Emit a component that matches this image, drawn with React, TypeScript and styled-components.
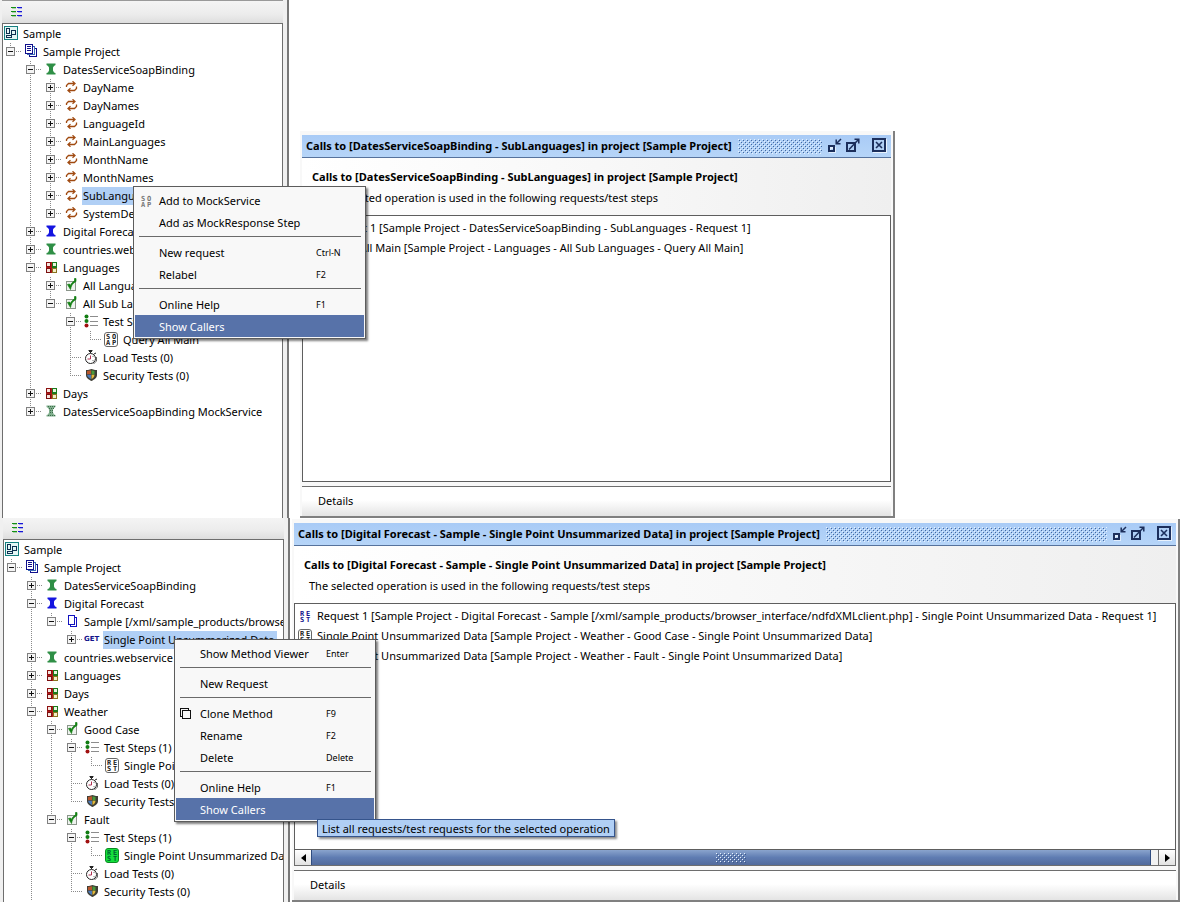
import React from 'react';
import styled, { createGlobalStyle, css } from 'styled-components';

const GlobalStyle = createGlobalStyle`
  *, *::before, *::after { box-sizing: border-box; }
  body {
    margin: 0;
    background: #fff;
    color: #000;
    font-family: 'Noto Sans', 'Open Sans', sans-serif;
    font-size: 11px;
    line-height: 18px;
  }
  button { font: inherit; color: inherit; margin: 0; padding: 0; border: 0; background: none; }
  h2, h3, p, ul { margin: 0; padding: 0; font-size: inherit; list-style: none; }
`;

/* ---------- page ---------- */

const Page = styled.main`
  display: grid;
  grid-template-rows: 1fr auto;
  min-height: 100vh;
`;

const Workspace = styled.section`
  position: relative;
  display: flex;
  min-width: 0;
`;

/* ---------- navigator ---------- */

const Navigator = styled.aside<{ $inset: number }>`
  flex: none;
  display: flex;
  flex-direction: column;
  width: ${p => 287 + p.$inset}px;
  padding: 0 4px 0 ${p => p.$inset}px;
  background: #f0f0f0;
  border-right: 2px solid #787878;
`;

const NavToolbar = styled.div<{ $lined?: boolean }>`
  display: flex;
  align-items: center;
  height: ${p => (p.$lined ? 23 : 21)}px;
  padding: 0 0 1px 9px;
  background: linear-gradient(#f4f4f4, #ececec 60%, #dedede);
  ${p => p.$lined && css`border-top: 1px solid #999;`}
`;

const TreeFrame = styled.div`
  flex: 1;
  padding: 1px 0;
  overflow: hidden;
  background: #fff;
  border: 1px solid #6e6e6e;
  border-bottom: 0;
`;

const TreeRow = styled.div`
  display: flex;
  height: 18px;
  white-space: nowrap;
`;

type GuideKind = 'blank' | 'line' | 'tee' | 'end';
const dotsDown = 'repeating-linear-gradient(180deg, #8a8a8a 0 1px, transparent 1px 2px)';
const dotsAcross = 'repeating-linear-gradient(90deg, #8a8a8a 0 1px, transparent 1px 2px)';

const Guide = styled.span<{ $kind: GuideKind }>`
  flex: none;
  width: 20px;
  height: 18px;
  padding: 4px 0 0 3px;
  background-repeat: no-repeat;
  ${p => p.$kind === 'line' && css`
    background-image: ${dotsDown};
    background-size: 1px 18px;
    background-position: 7px 0;
  `}
  ${p => (p.$kind === 'tee' || p.$kind === 'end') && css`
    background-image: ${dotsDown}, ${dotsAcross};
    background-size: 1px ${p.$kind === 'tee' ? 18 : 8}px, 12px 1px;
    background-position: 7px 0, 7px 8px;
  `}
`;

const Expander = styled.button`
  display: block;
  width: 9px;
  height: 9px;
`;

const IconCell = styled.span`
  flex: none;
  display: flex;
  align-items: center;
  justify-content: center;
  width: 16px;
  height: 16px;
`;

const TreeLabel = styled.span<{ $selected?: boolean }>`
  margin-left: 3px;
  padding: 0 2px 0 1px;
  background: ${p => (p.$selected ? '#b0cff5' : 'transparent')};
`;

/* ---------- result windows ---------- */

const Desk = styled.div<{ $roomy?: boolean }>`
  flex: 1;
  display: flex;
  min-width: 0;
  padding: ${p => (p.$roomy ? '131px 0 0 11px' : '1px 0 0 2px')};
`;

const Window = styled.article<{ $basis: string }>`
  flex: 0 1 ${p => p.$basis};
  display: flex;
  flex-direction: column;
  min-width: 0;
  padding: 4px 2px 0;
  background: #f8f8f8;
  border-right: 2px solid #808080;
  border-bottom: 2px solid #808080;
`;

const TitleBar = styled.header`
  display: flex;
  align-items: center;
  height: 23px;
  padding: 0 4px;
  background: linear-gradient(#a9cbf6, #b6d5f8);
  border-bottom: 1px solid #56729c;
`;

const TitleText = styled.h2`
  font-weight: 700;
  white-space: nowrap;
`;

const Bumps = styled.svg`
  flex: 1;
  min-width: 0;
  height: 15px;
  margin: 0 2px 0 6px;
`;

const WindowButton = styled.button<{ $apart?: boolean }>`
  display: flex;
  width: 15px;
  height: 15px;
  margin-bottom: 2px;
  margin-left: ${p => (p.$apart ? 12 : 3)}px;
`;

const Summary = styled.div`
  height: 57px;
  padding: 10px 10px 0;
  background: linear-gradient(90deg, #fff, #f8f8f8 50%, #efefef);
  white-space: nowrap;
`;

const SummaryTitle = styled.h3`
  font-weight: 700;
`;

const SummaryNote = styled.p`
  padding: 3px 0 0 5px;
`;

const ResultList = styled.ul`
  flex: 1;
  min-height: 0;
  padding: 2px 0;
  overflow: hidden;
  background: #fff;
  border: 1px solid #5e5e5e;
`;

const ResultRow = styled.li`
  display: flex;
  align-items: center;
  height: 20px;
  padding-left: 2px;
  white-space: nowrap;
`;

const ResultText = styled.span`
  margin-left: 4px;
`;

const ScrollBar = styled.div`
  display: flex;
  height: 16px;
  background: #eee;
  border: 1px solid #6e6e6e;
  border-top: 0;
`;

const ScrollButton = styled.button`
  display: flex;
  align-items: center;
  justify-content: center;
  width: 16px;
  background: linear-gradient(#fff, #e2e2e2);
`;

const Thumb = styled.div`
  flex: 1;
  display: flex;
  align-items: center;
  justify-content: center;
  background: linear-gradient(#8aa4cd, #5f7cb2 50%, #526b9c);
  border: 1px solid #2f4c80;
  border-width: 0 1px;
`;

const Track = styled.div`
  flex: 1;
  display: flex;
  padding-right: 7px;
  background: #f2f2f2;
  border-right: 1px solid #6e6e6e;
`;

const Details = styled.footer`
  height: 30px;
  margin-top: 4px;
  padding: 5px 16px;
  background: linear-gradient(#fff 45%, #e4e4e4);
  border-top: 1px solid #6e6e6e;
`;

/* ---------- menus ---------- */

const Menu = styled.div<{ $x: number; $y: number; $width: number }>`
  position: absolute;
  z-index: 2;
  left: ${p => p.$x}px;
  top: ${p => p.$y}px;
  width: ${p => p.$width}px;
  padding: 2px 1px 1px;
  background: #f8f8f8;
  border: 1px solid #5c5c5c;
  box-shadow: 2px 2px 2px rgba(0, 0, 0, 0.5);
`;

const MenuItem = styled.button<{ $active?: boolean }>`
  display: grid;
  grid-template-columns: 24px 1fr 48px;
  align-items: center;
  width: 100%;
  height: 22px;
  padding-top: 2px;
  text-align: left;
  white-space: nowrap;
  background: ${p => (p.$active ? '#5772a9' : 'transparent')};
  color: ${p => (p.$active ? '#fff' : 'inherit')};
`;

const MenuIcon = styled.span`
  display: flex;
  padding-left: 4px;
`;

const Shortcut = styled.span`
  font-size: 9px;
`;

const Separator = styled.hr`
  height: 1px;
  margin: 3px 3px 4px 4px;
  border: 0;
  background: #6a6a6a;
`;

const Tooltip = styled.div`
  position: absolute;
  z-index: 3;
  left: 317px;
  top: 301px;
  height: 18px;
  padding: 0 4px;
  line-height: 17px;
  white-space: nowrap;
  background: #b0cff5;
  border: 1px solid #35548c;
  box-shadow: 2px 2px 2px rgba(0, 0, 0, 0.45);
`;

/* ---------- icons ---------- */

const GridIcon = () => (
  <svg width="12" height="10" shapeRendering="crispEdges">
    {[0, 4, 8].map(y => (
      <g key={y}>
        <rect x="0" y={y} width="5" height="1" fill="#149014" />
        <rect x="1" y={y + 1} width="4" height="1" fill="#149014" opacity="0.300" />
        <rect x="6" y={y} width="5" height="1" fill="#1616d8" />
        <rect x="7" y={y + 1} width="4" height="1" fill="#1616d8" opacity="0.300" />
      </g>
    ))}
  </svg>
);

const RootIcon = () => (
  <svg width="14" height="14" shapeRendering="crispEdges" fill="none">
    <rect x="0.5" y="0.5" width="13" height="13" fill="#e4f6f4" stroke="#158080" />
    <rect x="2.5" y="2.5" width="3" height="5" stroke="#0d2f4f" />
    <rect x="7.5" y="4.5" width="4" height="4" stroke="#0d2f4f" />
    <rect x="2.5" y="9.5" width="5" height="2" stroke="#0d2f4f" />
  </svg>
);

const ProjectIcon = () => (
  <svg width="13" height="14" shapeRendering="crispEdges" fill="#fff" stroke="#10108c">
    <path d="M4.500 4.500h7v8h-7z" />
    <path d="M2.500 2.500h7v8h-7z" stroke="#3a6ab8" />
    <path d="M0.500 0.500h7v9h-7z" />
    <path d="M2 2.500h4M2 4.500h4M2 6.500h4" />
  </svg>
);

const DocIcon = () => (
  <svg width="11" height="13" shapeRendering="crispEdges" fill="#fff" stroke="#1212c0">
    <path d="M3.500 2.500h6v9h-6z" />
    <path d="M1.500 0.500h6v9h-6z" />
  </svg>
);

const BeamIcon = ({ color, faded }: { color: string; faded?: boolean }) => (
  <svg width="11" height="12">
    <path
      d="M0.500 0.500h9v1.500L8 3L7 4.500v3L8 9.500l1.500 0.500v1.500h-9v-1.500L2 9.500L3 7.500v-3L2 3L0.500 2z"
      fill={faded ? '#7fae8c' : color}
    />
    {faded && (
      <path d="M2 1.500h8M3 3.500h6M4 5.500h4M4 7.500h4M2 10.500h8" stroke="#3c6b4a" strokeDasharray="1 1" />
    )}
  </svg>
);

const CycleIcon = () => (
  <svg width="13" height="12" fill="none" stroke="#a04a10" strokeWidth="1.300">
    <path d="M1.500 6V4.500L3.500 2.500H9" />
    <path d="M7.500 0.300L10 2.500 7.500 4.700" />
    <path d="M11.500 5.500V7.500L9.500 9.500H4" />
    <path d="M5.500 7.300L3 9.500 5.500 11.700" />
  </svg>
);

const SuiteIcon = () => (
  <svg width="11" height="11" shapeRendering="crispEdges">
    <rect x="0.500" y="0.500" width="4" height="4" stroke="#8c1010" fill="#f6e4de" />
    <rect x="6.500" y="0.500" width="4" height="4" stroke="#1c7a1c" fill="#e8f6e0" />
    <rect x="0.500" y="6.500" width="4" height="4" stroke="#7a1010" fill="#f6e4de" />
    <rect x="6.500" y="6.500" width="4" height="4" stroke="#8a7420" fill="#f4eec8" />
    <path d="M0 5.500h5M5.500 0v11" stroke="#b01818" />
    <path d="M6 5.500h5" stroke="#1c7a1c" />
  </svg>
);

const CaseIcon = () => (
  <svg width="13" height="14">
    <rect x="1.500" y="3.500" width="9" height="9" fill="#eef2ee" stroke="#8a958a" />
    <path d="M2.500 6.500L5.500 11.500C6 8 7.500 5 11 3.500V0.500H9.500V3C7.500 4 6.300 5.500 5.500 7.500L4.500 6z" fill="#128012" stroke="#128012" strokeWidth="0.700" />
  </svg>
);

const StepsIcon = () => (
  <svg width="14" height="14">
    <circle cx="2.500" cy="2.500" r="2" fill="#127c12" />
    <circle cx="2.500" cy="7" r="2" fill="#127c12" />
    <circle cx="2.500" cy="11.500" r="2" fill="#a01010" />
    <path d="M6 2.500h8M6 7.500h8M6 11.500h8" stroke="#8c8c8c" shapeRendering="crispEdges" />
  </svg>
);

type BadgeProps = { top: string; bottom: string; ink?: string; fill?: string; frame?: string };
const BadgeIcon = ({ top, bottom, ink = '#222', fill = 'none', frame = 'none' }: BadgeProps) => (
  <svg width="15" height="15" fontFamily="'DejaVu Sans Mono', monospace" fontSize="7" fontWeight="700">
    <rect x="0.500" y="0.500" width="13" height="14" rx="2.500" fill={fill} stroke={frame} />
    <text x="2" y="7" fill={ink}>{top[0]}</text>
    <text x="8" y="7" fill={ink}>{top[1]}</text>
    <text x="2" y="13" fill={ink}>{bottom[0]}</text>
    <text x="8" y="13" fill={ink}>{bottom[1]}</text>
  </svg>
);

const GetIcon = () => (
  <svg width="16" height="8" overflow="visible" fontFamily="'DejaVu Sans', sans-serif" fontSize="7" fontWeight="700">
    <text x="0" y="6" fill="#12128c">GET</text>
  </svg>
);

const WatchIcon = () => (
  <svg width="14" height="15" fill="none" stroke="#222">
    <circle cx="6.500" cy="8.500" r="5" fill="#fff" />
    <path d="M4.500 0.500h4M5 1.500h3M6.500 1v2M10 4l2-1" />
    <path d="M12.500 7v4L9.500 14" stroke="#666" />
    <path d="M6.500 5.500v3.500h-3" stroke="#b03050" />
    <path d="M9.500 6l-1 1M9.500 11l-1-1" stroke="#777" />
  </svg>
);

const ShieldIcon = () => (
  <svg width="13" height="12">
    <path d="M1 1h2l3.500-1L10 1h2v5c0 3-2.500 4.500-5.500 6C3.500 10.500 1 9 1 6z" fill="#3e3e36" />
    <path d="M2 2L6 1.200v4H2z" fill="#b8562c" />
    <path d="M6.500 1.200L9.500 2v3.500H6.500z" fill="#4a9a3a" />
    <path d="M2 5.800H6V10C4 9 2.400 8 2 5.800z" fill="#4a78b8" />
    <path d="M6.500 5.800h3C9.400 8 8.500 9 6.500 10z" fill="#e2b83a" />
  </svg>
);

const CloneIcon = () => (
  <svg width="12" height="12" shapeRendering="crispEdges" fill="#f8f8f8" stroke="#111">
    <path d="M0.500 0.500h8v8h-8z" />
    <path d="M2.500 2.500h8v8h-8z" />
  </svg>
);

const IconifyIcon = () => (
  <svg width="15" height="15" fill="none">
    <path d="M2 9h5v5H2z" stroke="#fff" strokeWidth="2" transform="translate(1 1)" opacity="0.600" />
    <path d="M2 8h5v5H2z" stroke="#1c2f5c" strokeWidth="2" shapeRendering="crispEdges" />
    <path d="M9.200 1.500v4.300H13.500M9.500 5.500L14 1" stroke="#1c2f5c" strokeWidth="1.500" />
  </svg>
);

const MaximizeIcon = () => (
  <svg width="15" height="15" fill="none">
    <path d="M2 5h8v8H2z" stroke="#1c2f5c" strokeWidth="2" shapeRendering="crispEdges" />
    <path d="M4 11.500L13 2M9.500 1.200h4.300V5.500" stroke="#1c2f5c" strokeWidth="1.500" />
  </svg>
);

const CloseIcon = () => (
  <svg width="15" height="15" fill="none">
    <path d="M2 2h12v12H2z" stroke="#fff" opacity="0.700" strokeWidth="2" />
    <path d="M1 1h12v12H1z" stroke="#1c2f5c" strokeWidth="2" fill="#b0cff5" shapeRendering="crispEdges" />
    <path d="M4 4l6 6M10 4l-6 6" stroke="#1c2f5c" strokeWidth="1.600" />
  </svg>
);

const BumpPattern = ({ id, dark }: { id: string; dark: string }) => (
  <>
    <defs>
      <pattern id={id} width="4" height="4" patternUnits="userSpaceOnUse">
        <rect x="0" y="0" width="1" height="1" fill="#e6f1fd" />
        <rect x="2" y="2" width="1" height="1" fill="#e6f1fd" />
        <rect x="1" y="1" width="1" height="1" fill={dark} />
        <rect x="3" y="3" width="1" height="1" fill={dark} />
      </pattern>
    </defs>
    <rect width="100%" height="100%" fill={`url(#${id})`} shapeRendering="crispEdges" />
  </>
);

const icons = {
  root: <RootIcon />,
  project: <ProjectIcon />,
  soapInterface: <BeamIcon color="#2f8f46" />,
  restInterface: <BeamIcon color="#1414e0" />,
  mock: <BeamIcon color="#2f8f46" faded />,
  operation: <CycleIcon />,
  suite: <SuiteIcon />,
  testCase: <CaseIcon />,
  steps: <StepsIcon />,
  soap: <BadgeIcon top="SO" bottom="AP" fill="#fff" frame="#666" />,
  rest: <BadgeIcon top="RE" bottom="ST" fill="#fff" frame="#666" />,
  restPassed: <BadgeIcon top="RE" bottom="ST" fill="#14e03c" frame="#0b8a22" ink="#063" />,
  restPlain: <BadgeIcon top="RE" bottom="ST" ink="#12128c" />,
  soapMuted: <BadgeIcon top="SO" bottom="AP" ink="#777" />,
  resource: <DocIcon />,
  get: <GetIcon />,
  watch: <WatchIcon />,
  shield: <ShieldIcon />,
  clone: <CloneIcon />,
};
type IconName = keyof typeof icons;

/* ---------- tree ---------- */

type Node = {
  label: string;
  icon: IconName;
  open?: boolean;
  closed?: boolean;
  selected?: boolean;
  followed?: boolean;
  children?: Node[];
};

const operation = (label: string, selected = false): Node => ({
  label, icon: 'operation', closed: true, selected,
});

const loadAndSecurity: Node[] = [
  { label: 'Load Tests (0)', icon: 'watch' },
  { label: 'Security Tests (0)', icon: 'shield' },
];

const soapTree: Node = {
  label: 'Sample', icon: 'root',
  children: [{
    label: 'Sample Project', icon: 'project', open: true,
    children: [
      {
        label: 'DatesServiceSoapBinding', icon: 'soapInterface', open: true,
        children: [
          operation('DayName'), operation('DayNames'), operation('LanguageId'),
          operation('MainLanguages'), operation('MonthName'), operation('MonthNames'),
          operation('SubLanguages', true), operation('SystemDetails'),
        ],
      },
      { label: 'Digital Forecast', icon: 'restInterface', closed: true },
      { label: 'countries.webservice', icon: 'soapInterface', closed: true },
      {
        label: 'Languages', icon: 'suite', open: true,
        children: [
          { label: 'All Languages', icon: 'testCase', closed: true },
          {
            label: 'All Sub Languages', icon: 'testCase', open: true,
            children: [
              {
                label: 'Test Steps (1)', icon: 'steps', open: true,
                children: [{ label: 'Query All Main', icon: 'soap' }],
              },
              ...loadAndSecurity,
            ],
          },
        ],
      },
      { label: 'Days', icon: 'suite', closed: true },
      { label: 'DatesServiceSoapBinding MockService', icon: 'mock', closed: true },
    ],
  }],
};

const weatherCase = (label: string, icon: IconName): Node => ({
  label, icon: 'testCase', open: true,
  children: [
    {
      label: 'Test Steps (1)', icon: 'steps', open: true,
      children: [{ label: 'Single Point Unsummarized Data', icon }],
    },
    ...loadAndSecurity,
  ],
});

const restTree: Node = {
  label: 'Sample', icon: 'root',
  children: [{
    label: 'Sample Project', icon: 'project', open: true,
    children: [
      { label: 'DatesServiceSoapBinding', icon: 'soapInterface', closed: true },
      {
        label: 'Digital Forecast', icon: 'restInterface', open: true,
        children: [{
          label: 'Sample [/xml/sample_products/browser_interface]', icon: 'resource', open: true,
          children: [{
            label: 'Single Point Unsummarized Data', icon: 'get', closed: true, selected: true,
          }],
        }],
      },
      { label: 'countries.webservice', icon: 'soapInterface', closed: true },
      { label: 'Languages', icon: 'suite', closed: true },
      { label: 'Days', icon: 'suite', closed: true },
      {
        label: 'Weather', icon: 'suite', open: true, followed: true,
        children: [weatherCase('Good Case', 'rest'), weatherCase('Fault', 'restPassed')],
      },
    ],
  }],
};

type BranchProps = { node: Node; trail?: GuideKind[]; branch?: GuideKind };

function Branch({ node, trail = [], branch }: BranchProps) {
  const inner: GuideKind[] = branch ? [...trail, branch === 'tee' ? 'line' : 'blank'] : trail;
  return (
    <li>
      <TreeRow>
        {trail.map((kind, i) => <Guide key={i} $kind={kind} />)}
        {branch && (
          <Guide $kind={branch}>
            {(node.open || node.closed) && (
              <Expander aria-label={`${node.open ? 'Collapse' : 'Expand'} ${node.label}`}>
                <svg width="9" height="9" shapeRendering="crispEdges" display="block">
                  <rect x="0.500" y="0.500" width="8" height="8" fill="#f4f4f4" stroke="#808080" />
                  <path d={node.open ? 'M2 4.500h5' : 'M2 4.500h5M4.500 2v5'} stroke="#111" />
                </svg>
              </Expander>
            )}
          </Guide>
        )}
        <IconCell>{icons[node.icon]}</IconCell>
        <TreeLabel $selected={node.selected}>{node.label}</TreeLabel>
      </TreeRow>
      {node.children && (
        <ul>
          {node.children.map((child, i) => (
            <Branch
              key={i}
              node={child}
              trail={inner}
              branch={i < node.children!.length - 1 || child.followed ? 'tee' : 'end'}
            />
          ))}
        </ul>
      )}
    </li>
  );
}

function ProjectNavigator({ tree, inset, lined }: { tree: Node; inset: number; lined?: boolean }) {
  return (
    <Navigator $inset={inset}>
      <NavToolbar $lined={lined}><GridIcon /></NavToolbar>
      <TreeFrame><ul><Branch node={tree} /></ul></TreeFrame>
    </Navigator>
  );
}

/* ---------- window ---------- */

type CallsProps = {
  id: string;
  title: string;
  basis: string;
  rows: { icon: IconName; text: string }[];
  scroll?: boolean;
};

function CallsWindow({ id, title, basis, rows, scroll }: CallsProps) {
  return (
    <Window $basis={basis}>
      <TitleBar>
        <TitleText>{title}</TitleText>
        <Bumps><BumpPattern id={`${id}-title`} dark="#44689e" /></Bumps>
        <WindowButton aria-label="Minimize"><IconifyIcon /></WindowButton>
        <WindowButton aria-label="Maximize"><MaximizeIcon /></WindowButton>
        <WindowButton aria-label="Close" $apart><CloseIcon /></WindowButton>
      </TitleBar>
      <Summary>
        <SummaryTitle>{title}</SummaryTitle>
        <SummaryNote>The selected operation is used in the following requests/test steps</SummaryNote>
      </Summary>
      <ResultList>
        {rows.map(row => (
          <ResultRow key={row.text}>
            <IconCell>{icons[row.icon]}</IconCell>
            <ResultText>{row.text}</ResultText>
          </ResultRow>
        ))}
      </ResultList>
      {scroll && (
        <ScrollBar>
          <ScrollButton aria-label="Scroll left">
            <svg width="5" height="8"><path d="M5 0v8L0 4z" /></svg>
          </ScrollButton>
          <Track>
            <Thumb>
              <svg width="30" height="10"><BumpPattern id={`${id}-thumb`} dark="#3f5a8c" /></svg>
            </Thumb>
          </Track>
          <ScrollButton aria-label="Scroll right">
            <svg width="5" height="8"><path d="M0 0v8l5-4z" /></svg>
          </ScrollButton>
        </ScrollBar>
      )}
      <Details>Details</Details>
    </Window>
  );
}

/* ---------- menu ---------- */

type Entry = { label: string; keys?: string; icon?: IconName; active?: boolean } | 'rule';

const soapMenu: Entry[] = [
  { label: 'Add to MockService', icon: 'soapMuted' },
  { label: 'Add as MockResponse Step' },
  'rule',
  { label: 'New request', keys: 'Ctrl-N' },
  { label: 'Relabel', keys: 'F2' },
  'rule',
  { label: 'Online Help', keys: 'F1' },
  { label: 'Show Callers', active: true },
];

const restMenu: Entry[] = [
  { label: 'Show Method Viewer', keys: 'Enter' },
  'rule',
  { label: 'New Request' },
  'rule',
  { label: 'Clone Method', keys: 'F9', icon: 'clone' },
  { label: 'Rename', keys: 'F2' },
  { label: 'Delete', keys: 'Delete' },
  'rule',
  { label: 'Online Help', keys: 'F1' },
  { label: 'Show Callers', active: true },
];

function ContextMenu({ entries, x, y, width }: { entries: Entry[]; x: number; y: number; width: number }) {
  return (
    <Menu role="menu" $x={x} $y={y} $width={width}>
      {entries.map((entry, i) =>
        entry === 'rule' ? (
          <Separator key={i} />
        ) : (
          <MenuItem key={i} role="menuitem" $active={entry.active}>
            <MenuIcon>{entry.icon && icons[entry.icon]}</MenuIcon>
            <span>{entry.label}</span>
            <Shortcut>{entry.keys}</Shortcut>
          </MenuItem>
        ),
      )}
    </Menu>
  );
}

export default function App() {
  return (
    <>
      <GlobalStyle />
      <Page>
        <Workspace>
          <ProjectNavigator tree={soapTree} inset={2} lined />
          <Desk $roomy>
            <CallsWindow
              id="soap"
              basis="595px"
              title="Calls to [DatesServiceSoapBinding - SubLanguages] in project [Sample Project]"
              rows={[
                { icon: 'soap', text: 'Request 1 [Sample Project - DatesServiceSoapBinding - SubLanguages - Request 1]' },
                { icon: 'soap', text: 'Query All Main [Sample Project - Languages - All Sub Languages - Query All Main]' },
              ]}
            />
          </Desk>
          <ContextMenu entries={soapMenu} x={133} y={186} width={233} />
        </Workspace>
        <Workspace>
          <ProjectNavigator tree={restTree} inset={3} />
          <Desk>
            <CallsWindow
              id="rest"
              basis="100%"
              title="Calls to [Digital Forecast - Sample - Single Point Unsummarized Data] in project [Sample Project]"
              rows={[
                { icon: 'restPlain', text: 'Request 1 [Sample Project - Digital Forecast - Sample [/xml/sample_products/browser_interface/ndfdXMLclient.php] - Single Point Unsummarized Data - Request 1]' },
                { icon: 'rest', text: 'Single Point Unsummarized Data [Sample Project - Weather - Good Case - Single Point Unsummarized Data]' },
                { icon: 'rest', text: 'Single Point Unsummarized Data [Sample Project - Weather - Fault - Single Point Unsummarized Data]' },
              ]}
              scroll
            />
          </Desk>
          <ContextMenu entries={restMenu} x={174} y={121} width={202} />
          <Tooltip role="tooltip">List all requests/test requests for the selected operation</Tooltip>
        </Workspace>
      </Page>
    </>
  );
}
